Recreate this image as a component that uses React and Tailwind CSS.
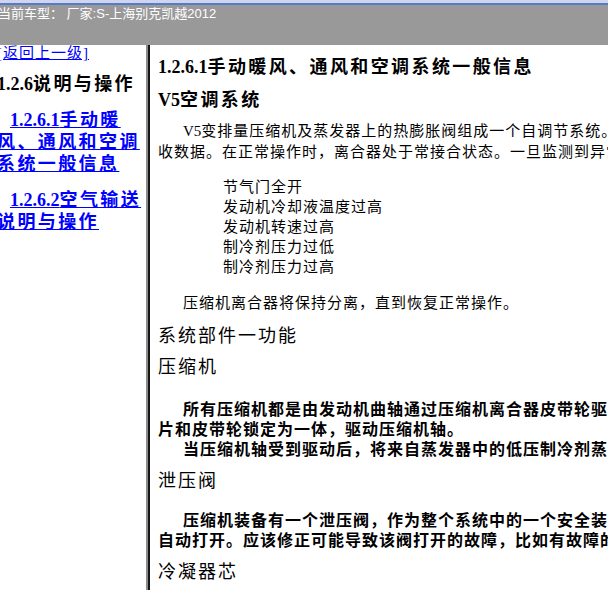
import React from 'react';

const serif = {fontFamily: '"Liberation Serif", "Noto Sans CJK SC", serif'};

function Latin({children}) {
    return <span className="tracking-normal">{children}</span>;
}

export default function App() {
    return (
        <div className="h-screen w-full flex flex-col overflow-hidden bg-white">
            <div className="h-[3px] bg-[#cdd6ee]"/>
            <div className="h-[2px] bg-[#5b79c9]"/>
            <div
                className="h-[40px] bg-[#999999] text-white text-[13px] leading-[16px] pt-[1px] -ml-[2px] font-['Liberation_Sans','Noto_Sans_CJK_SC',sans-serif]">
                当前车型： 厂家:S-上海别克凯越2012
            </div>

            <div className="flex-1 flex min-h-0" style={serif}>
                {/* left nav */}
                <div className="w-[146px] shrink-0 overflow-hidden">
                    <div className="-ml-[3px]">
                        <a className="block text-[15px] tracking-[1px] leading-[16px] text-[#0000ff] underline">[返回上一级]</a>
                        <div className="mt-[12px] text-[18px] tracking-[2.4px] leading-[22px] font-bold text-black">
                            <Latin>1.2.6</Latin>说明与操作
                        </div>
                        <a className="block mt-[14px] text-[18px] tracking-[2.4px] leading-[22px] font-bold text-[#0000ff] underline indent-[13px]">
                            <Latin>1.2.6.1</Latin>手动暖<br/>风、通风和空调<br/>系统一般信息
                        </a>
                        <a className="block mt-[14px] text-[18px] tracking-[2.4px] leading-[22px] font-bold text-[#0000ff] underline indent-[13px]">
                            <Latin>1.2.6.2</Latin>空气输送<br/>说明与操作
                        </a>
                    </div>
                </div>

                <div className="w-[4px] shrink-0 border-l-2 border-l-[#8c8c8c] border-r-2 border-r-[#151515]"/>

                {/* content */}
                <div className="flex-1 min-w-0 overflow-hidden pl-[8px] text-black whitespace-nowrap">
                    <div className="mt-[11px] text-[18px] tracking-[2.4px] leading-[22px] font-bold">
                        <Latin>1.2.6.1</Latin>手动暖风、通风和空调系统一般信息
                    </div>
                    <div className="mt-[11px] text-[18px] tracking-[2.4px] leading-[22px] font-bold">
                        <Latin>V5</Latin>空调系统
                    </div>
                    <div className="mt-[10px] text-[15px] tracking-[1px] leading-[21px]">
                        <div className="pl-[25px]"><Latin>V5</Latin>变排量压缩机及蒸发器上的热膨胀阀组成一个自调节系统。该系统</div>
                        <div>收数据。在正常操作时，离合器处于常接合状态。一旦监测到异常情况</div>
                    </div>
                    <div className="mt-[14px] pl-[65px] text-[15px] tracking-[1px] leading-[20px]">
                        <div>节气门全开</div>
                        <div>发动机冷却液温度过高</div>
                        <div>发动机转速过高</div>
                        <div>制冷剂压力过低</div>
                        <div>制冷剂压力过高</div>
                    </div>
                    <div className="mt-[16px] pl-[25px] text-[15px] tracking-[1px] leading-[20px]">
                        压缩机离合器将保持分离，直到恢复正常操作。
                    </div>
                    <div className="mt-[12px] text-[18px] tracking-[2px] leading-[22px]">系统部件一功能</div>
                    <div className="mt-[9px] text-[18px] tracking-[2px] leading-[22px]">压缩机</div>
                    <div className="mt-[22px] text-[16px] tracking-[1px] leading-[20px] font-bold">
                        <div className="pl-[25px]">所有压缩机都是由发动机曲轴通过压缩机离合器皮带轮驱动的</div>
                        <div>片和皮带轮锁定为一体，驱动压缩机轴。</div>
                        <div className="pl-[25px]">当压缩机轴受到驱动后，将来自蒸发器中的低压制冷剂蒸气吸入</div>
                    </div>
                    <div className="mt-[10px] text-[18px] tracking-[2px] leading-[22px]">泄压阀</div>
                    <div className="mt-[19px] text-[16px] tracking-[1px] leading-[20px] font-bold">
                        <div className="pl-[25px]">压缩机装备有一个泄压阀，作为整个系统中的一个安全装置</div>
                        <div>自动打开。应该修正可能导致该阀打开的故障，比如有故障的</div>
                    </div>
                    <div className="mt-[10px] text-[18px] tracking-[2px] leading-[22px]">冷凝器芯</div>
                </div>
            </div>
        </div>
    );
}
